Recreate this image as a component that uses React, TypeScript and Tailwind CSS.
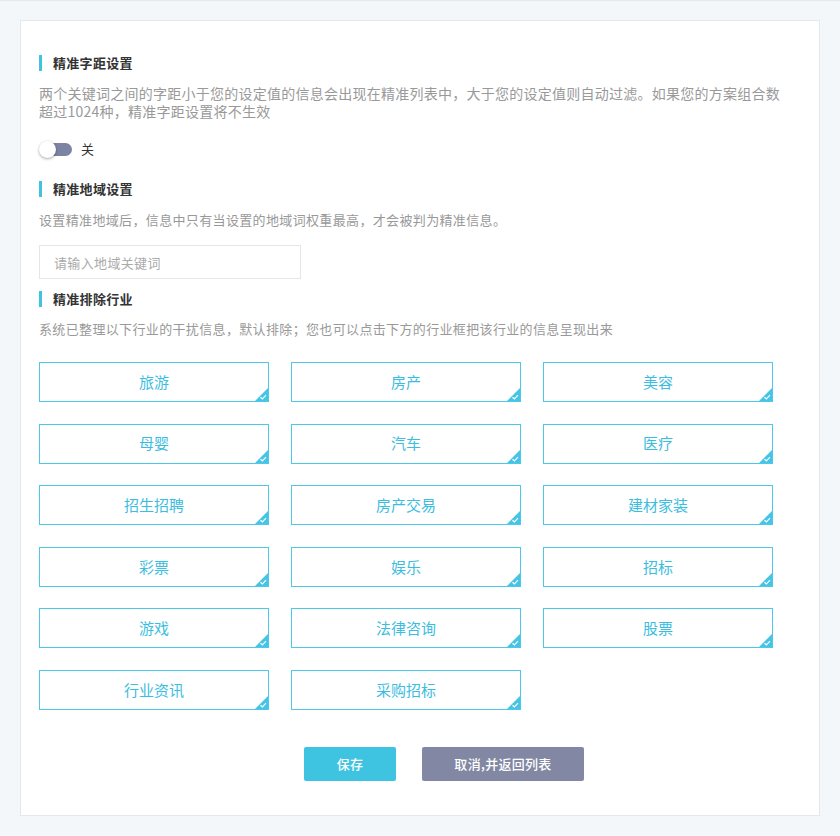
import React from "react";

const INDUSTRIES = [
  "旅游", "房产", "美容",
  "母婴", "汽车", "医疗",
  "招生招聘", "房产交易", "建材家装",
  "彩票", "娱乐", "招标",
  "游戏", "法律咨询", "股票",
  "行业资讯", "采购招标",
];

function SectionTitle({ children }: { children: React.ReactNode }) {
  return (
    <div className="flex items-center h-[18px]">
      <span className="w-[3px] h-[16px] bg-[#3ec3e0]" />
      <span className="ml-[11px] text-[13px] font-bold text-[#333] tracking-[0.3px]">{children}</span>
    </div>
  );
}

function Tile({ label }: { label: string }) {
  return (
    <div className="relative h-[40px] w-[230px] border border-[#4cc9ea] flex items-center justify-center text-[15px] text-[#3bbde0]">
      {label}
      <svg className="absolute right-0 bottom-0" width="13" height="13" viewBox="0 0 13 13">
        <path d="M13 0 L13 13 L0 13 Z" fill="#45c4e6" />
        <path d="M5.5 9.2 L7.4 11 L11 7.2" stroke="#fff" strokeWidth="1.2" fill="none" />
      </svg>
    </div>
  );
}

export default function App() {
  return (
    <div
      className="w-[840px] h-[836px] bg-[#f3f7fa] border-t border-[#e6e9ec] pt-[19px] pl-[20px]"
      style={{ fontFamily: '"Noto Sans CJK SC", "Noto Sans", sans-serif' }}
    >
      <div className="w-[800px] h-[796px] bg-white border border-[#e4e8eb] pl-[18px] pt-[33px]">
        <SectionTitle>精准字距设置</SectionTitle>
        <p className="mt-[12px] w-[752px] text-[14px] leading-[18px] tracking-[0.25px] text-[#999]">
          两个关键词之间的字距小于您的设定值的信息会出现在精准列表中，大于您的设定值则自动过滤。如果您的方案组合数超过1024种，精准字距设置将不生效
        </p>
        <div className="mt-[19px] flex items-center h-[20px]">
          <div className="relative w-[34px] h-[20px] flex items-center">
            <div className="absolute left-[3px] w-[30px] h-[13px] rounded-full bg-[#7d83a3]" />
            <div className="absolute left-0 w-[17px] h-[17px] rounded-full bg-white shadow-[0_1px_3px_rgba(0,0,0,0.35)]" />
          </div>
          <span className="ml-[8px] text-[13px] text-[#333]">关</span>
        </div>

        <div className="mt-[21px]">
          <SectionTitle>精准地域设置</SectionTitle>
        </div>
        <p className="mt-[13px] text-[13px] leading-[18px] tracking-[0.35px] text-[#999]">
          设置精准地域后，信息中只有当设置的地域词权重最高，才会被判为精准信息。
        </p>
        <input
          className="mt-[16px] block w-[262px] h-[34px] border border-[#e4e6ea] px-[14px] text-[13px] tracking-[0.35px] text-[#333] placeholder:text-[#aaa] outline-none"
          placeholder="请输入地域关键词"
        />

        <div className="mt-[11px]">
          <SectionTitle>精准排除行业</SectionTitle>
        </div>
        <p className="mt-[12px] text-[13px] leading-[18px] tracking-[0.35px] text-[#999]">
          系统已整理以下行业的干扰信息，默认排除；您也可以点击下方的行业框把该行业的信息呈现出来
        </p>
        <div className="mt-[24px] grid grid-cols-[230px_230px_230px] gap-x-[22px] gap-y-[21.6px]">
          {INDUSTRIES.map((name) => (
            <Tile key={name} label={name} />
          ))}
        </div>

        <div className="mt-[37px] flex pl-[265px] gap-[26px]">
          <button className="w-[92px] h-[34px] rounded-[2px] bg-[#3ec3e0] text-white text-[13px] font-medium tracking-[0.3px]">
            保存
          </button>
          <button className="w-[162px] h-[34px] rounded-[2px] bg-[#8288a3] text-white text-[13px] font-medium tracking-[0.3px]">
            取消,并返回列表
          </button>
        </div>
      </div>
    </div>
  );
}
